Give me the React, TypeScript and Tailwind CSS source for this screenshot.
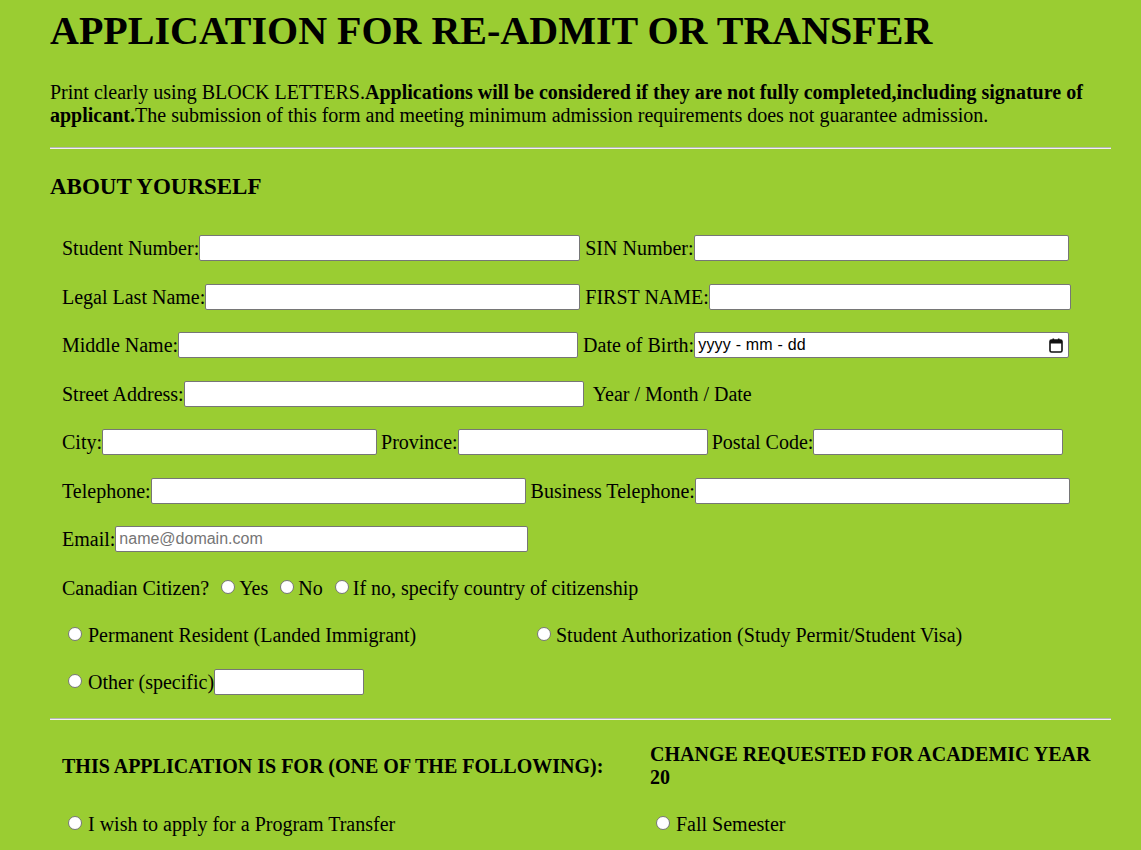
import React from "react";

const Input = ({ w, placeholder }: { w: string; placeholder?: string }) => (
	<input
		type="text"
		placeholder={placeholder}
		className={`${w} h-[26px] bg-white border border-[#767676] rounded-[2px] px-[3px] text-[16px] font-['Liberation_Sans',Arial,sans-serif] placeholder:text-[#757575] outline-none`}
	/>
);

const Radio = ({ className = "" }: { className?: string }) => (
	<span
		className={`inline-block w-[14px] h-[14px] rounded-full bg-white border border-[#767676] shrink-0 -translate-y-[1px] ${className}`}
	/>
);

const DateInput = () => (
	<div className="w-[375px] h-[26px] bg-white border border-[#767676] rounded-[2px] flex items-center justify-between pl-[3px] pr-[5px]">
		<span className="text-[16px] font-['Liberation_Sans',Arial,sans-serif] tracking-[0.2px]">yyyy - mm - dd</span>
		<svg width="14" height="15" viewBox="0 0 14 15">
			<rect x="1" y="2" width="12" height="12" rx="1.5" fill="none" stroke="#111" strokeWidth="1.6" />
			<rect x="1" y="2" width="12" height="3.5" fill="#111" />
			<rect x="3.5" y="0.5" width="1.6" height="3" fill="#111" />
			<rect x="8.9" y="0.5" width="1.6" height="3" fill="#111" />
		</svg>
	</div>
);

const Rule = () => <div className="border-t border-t-[#b5b5b5] border-b border-b-[#f2f2f2]" />;

export default function App() {
	return (
		<div className="min-h-screen bg-[#9acd32] text-black text-[20px] font-['Liberation_Serif','Times_New_Roman',serif] pl-[50px] pr-[30px] pt-[8px] pb-[40px]">
			<h1 className="text-[40px] font-bold leading-[46px]">APPLICATION FOR RE-ADMIT OR TRANSFER</h1>
			<p className="mt-[27px] leading-[23px]">
				Print clearly using BLOCK LETTERS.
				<b>Applications will be considered if they are not fully completed,including signature of applicant.</b>
				The submission of this form and meeting minimum admission requirements does not guarantee admission.
			</p>
			<div className="mt-[20px]">
				<Rule />
			</div>
			<h3 className="mt-[24px] text-[23px] font-bold leading-[27px]">ABOUT YOURSELF</h3>

			<div className="pl-[12px] mt-[35px] flex flex-col gap-[22.5px]">
				<div className="flex items-center h-[26px]">
					<span>Student Number:</span>
					<Input w="w-[381px]" />
					<span className="ml-[5px]">SIN Number:</span>
					<Input w="w-[375px]" />
				</div>
				<div className="flex items-center h-[26px]">
					<span>Legal Last Name:</span>
					<Input w="w-[375px]" />
					<span className="ml-[5px]">FIRST NAME:</span>
					<Input w="w-[362px]" />
				</div>
				<div className="flex items-center h-[26px]">
					<span>Middle Name:</span>
					<Input w="w-[400px]" />
					<span className="ml-[5px]">Date of Birth:</span>
					<DateInput />
				</div>
				<div className="flex items-center h-[26px]">
					<span>Street Address:</span>
					<Input w="w-[400px]" />
					<span className="ml-[9px]">Year / Month / Date</span>
				</div>
				<div className="flex items-center h-[26px]">
					<span>City:</span>
					<Input w="w-[275px]" />
					<span className="ml-[4px]">Province:</span>
					<Input w="w-[250px]" />
					<span className="ml-[4px]">Postal Code:</span>
					<Input w="w-[250px]" />
				</div>
				<div className="flex items-center h-[26px]">
					<span>Telephone:</span>
					<Input w="w-[375px]" />
					<span className="ml-[5px]">Business Telephone:</span>
					<Input w="w-[375px]" />
				</div>
				<div className="flex items-center h-[26px]">
					<span>Email:</span>
					<Input w="w-[413px]" placeholder="name@domain.com" />
				</div>
				<div className="flex items-center h-[26px]">
					<span>Canadian Citizen?</span>
					<Radio className="ml-[12px] mr-[4px]" />
					<span>Yes</span>
					<Radio className="ml-[12px] mr-[4px]" />
					<span>No</span>
					<Radio className="ml-[12px] mr-[4px]" />
					<span>If no, specify country of citizenship</span>
				</div>
				<div className="flex items-center h-[26px] -mt-[1.5px]">
					<div className="w-[469px] flex items-center">
						<Radio className="ml-[6px] mr-[6px]" />
						<span>Permanent Resident (Landed Immigrant)</span>
					</div>
					<Radio className="ml-[6px] mr-[5px]" />
					<span>Student Authorization (Study Permit/Student Visa)</span>
				</div>
				<div className="flex items-center h-[26px] -mt-[1.5px]">
					<Radio className="ml-[6px] mr-[6px]" />
					<span>Other (specific)</span>
					<Input w="w-[150px]" />
				</div>
			</div>

			<div className="mt-[23px]">
				<Rule />
			</div>

			<div className="pl-[12px] mt-[23px] flex">
				<div className="w-[588px] flex flex-col">
					<div className="h-[46px] flex items-center">
						<h4 className="font-bold leading-[23px] translate-y-[1px]">THIS APPLICATION IS FOR (ONE OF THE FOLLOWING):</h4>
					</div>
					<div className="mt-[22px] flex items-center h-[26px]">
						<Radio className="ml-[6px] mr-[6px]" />
						<span>I wish to apply for a Program Transfer</span>
					</div>
				</div>
				<div className="flex-1 flex flex-col">
					<div className="h-[46px] flex items-center">
						<h4 className="font-bold leading-[23px]">
							CHANGE REQUESTED FOR ACADEMIC YEAR
							<br />
							20
						</h4>
					</div>
					<div className="mt-[22px] flex items-center h-[26px]">
						<Radio className="ml-[6px] mr-[6px]" />
						<span>Fall Semester</span>
					</div>
				</div>
			</div>
		</div>
	);
}
